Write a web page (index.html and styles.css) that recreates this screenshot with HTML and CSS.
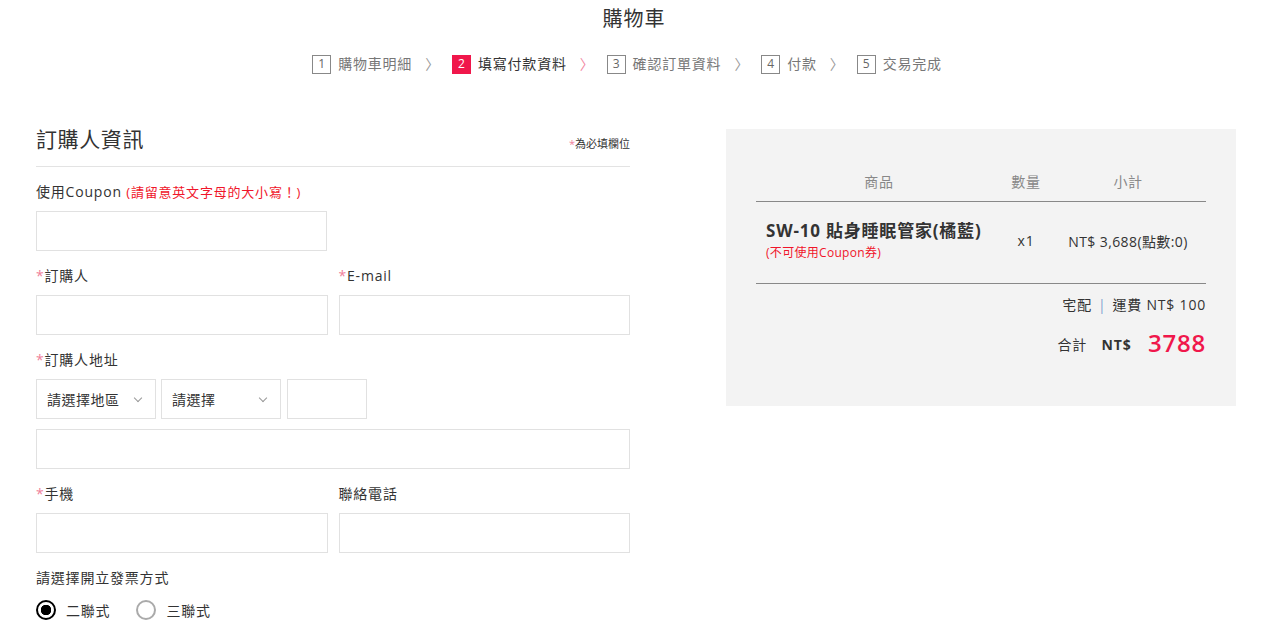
FILE: index.html
```html
<!DOCTYPE html>
<html lang="zh-Hant">
<head>
    <meta charset="UTF-8">
    <meta name="viewport" content="width=device-width, initial-scale=1.0">
    <title>購物車</title>
    <link rel="stylesheet" href="styles.css">
</head>
<body>
    <header class="cart-header">
        <h1>購物車</h1>
        <ol class="steps">
            <li class="step"><span class="step-num">1</span>購物車明細<span class="step-arrow">〉</span></li>
            <li class="step active"><span class="step-num">2</span>填寫付款資料<span class="step-arrow">〉</span></li>
            <li class="step"><span class="step-num">3</span>確認訂單資料<span class="step-arrow">〉</span></li>
            <li class="step"><span class="step-num">4</span>付款<span class="step-arrow">〉</span></li>
            <li class="step"><span class="step-num">5</span>交易完成</li>
        </ol>
    </header>

    <main class="checkout">
        <section class="buyer">
            <div class="buyer-head">
                <h2>訂購人資訊</h2>
                <span class="required-note"><i class="req">*</i>為必填欄位</span>
            </div>

            <div class="field">
                <label>使用Coupon <span class="warn">(請留意英文字母的大小寫！)</span></label>
                <div class="row">
                    <input type="text" class="input half">
                </div>
            </div>

            <div class="row two">
                <div class="field">
                    <label><i class="req">*</i>訂購人</label>
                    <input type="text" class="input">
                </div>
                <div class="field">
                    <label><i class="req">*</i>E-mail</label>
                    <input type="text" class="input">
                </div>
            </div>

            <div class="field">
                <label><i class="req">*</i>訂購人地址</label>
                <div class="address">
                    <div class="select">請選擇地區<span class="caret"></span></div>
                    <div class="select">請選擇<span class="caret"></span></div>
                    <input type="text" class="input zip">
                </div>
                <input type="text" class="input full">
            </div>

            <div class="row two">
                <div class="field">
                    <label><i class="req">*</i>手機</label>
                    <input type="text" class="input">
                </div>
                <div class="field">
                    <label>聯絡電話</label>
                    <input type="text" class="input">
                </div>
            </div>

            <div class="field">
                <label>請選擇開立發票方式</label>
                <div class="radios">
                    <span class="radio checked"><span class="dot"></span>二聯式</span>
                    <span class="radio"><span class="dot"></span>三聯式</span>
                </div>
            </div>
        </section>

        <aside class="summary">
            <table class="items">
                <thead>
                    <tr>
                        <th class="col-name">商品</th>
                        <th class="col-qty">數量</th>
                        <th class="col-sub">小計</th>
                    </tr>
                </thead>
                <tbody>
                    <tr>
                        <td class="col-name">
                            <div class="item-name">SW-10 貼身睡眠管家(橘藍)</div>
                            <div class="item-note">(不可使用Coupon券)</div>
                        </td>
                        <td class="col-qty">x1</td>
                        <td class="col-sub">NT$ 3,688(點數:0)</td>
                    </tr>
                </tbody>
            </table>
            <div class="shipping">宅配<span class="sep">|</span>運費 NT$ 100</div>
            <div class="total">合計 <b>NT$</b> <span class="amount">3788</span></div>
        </aside>
    </main>
</body>
</html>
```

FILE: styles.css
```css
body {
    margin: 0;
    font-family: 'Open Sans', 'Noto Sans CJK TC', sans-serif;
    font-size: 14px;
    letter-spacing: 0.8px;
    color: #333;
    background: #fff;
}

.cart-header {
    text-align: center;
    padding-top: 5px;
}

h1 {
    margin: 0;
    font-size: 20px;
    font-weight: 400;
    line-height: 28px;
    letter-spacing: 1px;
    color: #333;
}

.steps {
    list-style: none;
    margin: 21px 0 0;
    padding: 0 14px 0 0;
    display: flex;
    justify-content: center;
}

.step {
    display: flex;
    align-items: center;
    color: #777;
    font-size: 14px;
    line-height: 20px;
}

.step-num {
    width: 17px;
    height: 17px;
    border: 1px solid #888;
    display: flex;
    justify-content: center;
    align-items: center;
    font-size: 12px;
    letter-spacing: 0;
    color: #666;
    margin-right: 7px;
}

.step-arrow {
    color: #999;
    margin: 0 12px 0 13px;
}

.step.active {
    color: #333;
}

.step.active .step-num {
    background-color: #f0174b;
    border-color: #f0174b;
    color: #fff;
}

.step.active .step-arrow {
    color: #f2889f;
}

.checkout {
    display: flex;
    align-items: flex-start;
    padding: 51px 32px 0 36px;
    gap: 96px;
}

.buyer {
    width: 594px;
}

.buyer-head {
    display: flex;
    justify-content: space-between;
    align-items: flex-end;
    border-bottom: 1px solid #e3e3e3;
    padding-bottom: 13px;
    margin-bottom: 14px;
}

h2 {
    margin: 0;
    font-size: 21px;
    font-weight: 400;
    line-height: 28px;
    letter-spacing: 0.6px;
    color: #333;
}

.required-note {
    font-size: 11px;
    letter-spacing: 0;
    color: #333;
    padding-bottom: 2px;
}

.req {
    font-style: normal;
    color: #f0809a;
}

.field label {
    display: block;
    font-size: 14px;
    line-height: 22px;
    margin-bottom: 8px;
}

.warn {
    color: #f0152a;
    font-size: 13px;
}

.field {
    margin-bottom: 14px;
}

.row.two {
    display: flex;
    gap: 11px;
}

.row.two .field {
    flex: 1;
    margin-bottom: 14px;
}

.input {
    display: block;
    box-sizing: border-box;
    width: 100%;
    height: 40px;
    border: 1px solid #e1e1e1;
    background: #fff;
    margin: 0;
    padding: 0 10px;
    font: inherit;
}

.input.half {
    width: 291px;
}

.address {
    display: flex;
    gap: 5px;
    margin-bottom: 10px;
}

.select {
    box-sizing: border-box;
    width: 120px;
    height: 40px;
    border: 1px solid #e1e1e1;
    padding: 0 10px;
    display: flex;
    align-items: center;
    justify-content: space-between;
    font-size: 14px;
    letter-spacing: 0.5px;
    color: #333;
}

.caret {
    width: 5px;
    height: 5px;
    border-right: 1px solid #999;
    border-bottom: 1px solid #999;
    transform: rotate(45deg);
    margin: 0 4px 3px 0;
}

.input.zip {
    width: 80px;
    margin-left: 1px;
}

.input.full {
    width: 594px;
}

.radios {
    display: flex;
    gap: 26px;
    margin-top: 11px;
}

.radio {
    display: flex;
    align-items: center;
    font-size: 14px;
}

.dot {
    box-sizing: border-box;
    width: 20px;
    height: 20px;
    border: 2px solid #aaa;
    border-radius: 50%;
    margin-right: 10px;
}

.radio.checked .dot {
    border-color: #000;
    background: radial-gradient(circle, #000 0 5px, #fff 5.5px);
}

.summary {
    width: 450px;
    background: #f3f3f3;
    padding: 34px 30px 45px;
    margin-top: 4px;
}

.items {
    width: 450px;
    border-collapse: collapse;
}

.items th {
    font-weight: 400;
    color: #888;
    font-size: 14px;
    line-height: 20px;
    padding: 9px 0 9px;
    border-bottom: 1px solid #888;
}

.items td {
    padding: 16px 0 20px;
    border-bottom: 1px solid #888;
    vertical-align: middle;
    font-size: 14px;
}

.col-name {
    width: 246px;
}

.items td.col-name {
    padding-left: 10px;
    box-sizing: border-box;
}

.col-qty {
    width: 48px;
    text-align: center;
}

.col-sub {
    width: 156px;
    text-align: center;
    letter-spacing: 0.4px;
}

.item-name {
    font-size: 17px;
    font-weight: 700;
    line-height: 25px;
    letter-spacing: 0.8px;
    color: #333;
}

.item-note {
    font-size: 12px;
    color: #f0152a;
    line-height: 20px;
    letter-spacing: 0.3px;
}

.shipping {
    text-align: right;
    margin-top: 11px;
    font-size: 14px;
    line-height: 20px;
}

.sep {
    color: #7fa4d0;
    margin: 0 6px;
}

.total {
    text-align: right;
    margin-top: 12px;
    font-size: 14px;
    line-height: 32px;
}

.total b {
    margin: 0 12px 0 10px;
}

.amount {
    color: #f0174b;
    font-size: 24px;
    font-weight: 600;
    vertical-align: -2px;
}
```
